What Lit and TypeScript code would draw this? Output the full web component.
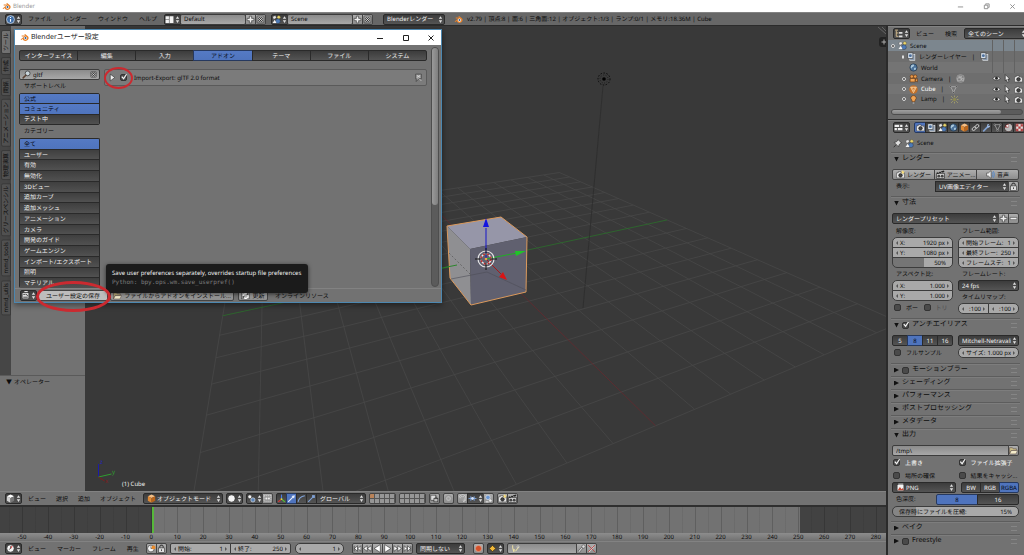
import { LitElement, html, svg, css, nothing, TemplateResult } from "lit";
import { customElement, property, state } from "lit/decorators.js";
import { classMap } from "lit/directives/class-map.js";

/* ---------- icons, all on a 16 x 16 grid ---------- */
const cubeShape = (top: string, left: string, right: string) => svg`
  <path d="M8 1 14.5 4 8 7 1.5 4Z" fill=${top} /><path d="M1.5 4 8 7V15.5L1.5 12Z" fill=${left} /><path d="M14.5 4 8 7V15.5L14.5 12Z" fill=${right} />`;
const sceneShape = svg`<path d="M1 3 6 1 8 5 3 8Z" fill="#e8e8e8" stroke="#333" stroke-width=".6"/><circle cx="12" cy="4" r="3" fill="#e9d56a" stroke="#333" stroke-width=".6"/><circle cx="10.5" cy="11" r="4.3" fill="#4d79b5" stroke="#222" stroke-width=".6"/><path d="M1 14 5 8.500 8 14Z" fill="#f4f4f4"/>`;
const cameraShape = svg`<path d="M1 5h3V3h5v2h6v9H1Z" fill="#ededed" stroke="#222" stroke-width=".8"/><circle cx="8" cy="9.500" r="3.200" fill="#444" stroke="#111"/><path d="M12 6.500h2" stroke="#222"/>`;
const layerShape = svg`<rect x="5" y="4" width="9" height="11" fill="#8a9bb0" stroke="#eee"/><rect x="1.500" y="1.500" width="9" height="10" fill="#d7e1ec" stroke="#333"/><circle cx="6" cy="6.500" r="2.600" fill="#4c6f9c"/>`;
const ICONS: Record<string, unknown> = {
  blender: svg`<path d="M1 11.500 7.500 6H3V4.500h6.500L7.600 2.700 9 1.600l5 4.200c2.600 2.500 1.400 8-4 8.200-3 .1-5-1.600-5.400-4L2.600 12.400Z" fill="#e8822a"/><circle cx="9.800" cy="9" r="3" fill="#fff"/><circle cx="9.800" cy="9" r="1.800" fill="#2c5d92"/>`,
  info: svg`<circle cx="8" cy="8" r="7" fill="#3f6ea8" stroke="#dfe8f2" stroke-width="1.200"/><path d="M7 7h2v5H7ZM7 3.500h2v2H7Z" fill="#fff"/>`,
  updown: svg`<path d="M5 6.500 8 2l3 4.500ZM5 9.500 8 14l3-4.500Z" fill="#e0e0e0"/>`,
  layout: svg`<path d="M1 2h6v6H1ZM1 9h6v5H1ZM8 2h7v12H8Z" fill="#f1f1f1"/>`,
  scene: sceneShape,
  plus: svg`<path d="M6 2h4v4h4v4h-4v4H6v-4H2V6h4Z" fill="#eee" stroke="#333" stroke-width="1.100"/>`,
  minus: svg`<path d="M2 6h12v4H2Z" fill="#eee" stroke="#444" stroke-width="1"/>`,
  close: svg`<rect x="1.500" y="1.500" width="13" height="13" rx="2" fill="none" stroke="#333"/><path d="m4 4 8 8M12 4l-8 8" stroke="#222" stroke-width="3"/><path d="m4 4 8 8M12 4l-8 8" stroke="#eee" stroke-width="1.400"/>`,
  search: svg`<circle cx="10" cy="6" r="4.300" fill="#c9d4da" stroke="#333" stroke-width="1.300"/><path d="M6.800 9.200 2 14" stroke="#5b4030" stroke-width="2.600" stroke-linecap="round"/>`,
  tri: svg`<path d="M4 2 12 8 4 14Z" fill="#eee" stroke="#222"/>`,
  user: svg`<path d="M3 2h10v8H9l-5 5v-5H3Z" fill="#999" stroke="#2b2b2b"/><path d="m5 4 6 4M11 4 5 8M9 10l4 4" stroke="#ddd" stroke-width="1.300"/>`,
  prefs: svg`<rect x="2" y="3" width="12" height="11" fill="#ddd" stroke="#222"/><path d="M4 11h8M4 6h4M9 5l3 4" stroke="#333" stroke-width="1.500"/><path d="M6 1h6" stroke="#ddd" stroke-width="2"/>`,
  folder: svg`<path d="M1 3h5l1.500 2H13v3H4L1 14Z" fill="#c9bb85" stroke="#433" stroke-width=".8"/><path d="M4 8h11l-2.500 6H1Z" fill="#f4eccb" stroke="#433" stroke-width=".8"/>`,
  reload: svg`<rect x="1" y="2" width="14" height="12" fill="#bbb" stroke="#444"/><path d="M4 9a4 4 0 0 1 7-3M12 7a4 4 0 0 1-7 4" fill="none" stroke="#fff" stroke-width="2"/><path d="m9 6 4 1V3ZM7 10l-4-1v4Z" fill="#333"/>`,
  tree: svg`<path d="M2 2h5M4 3v10M4 7h4M4 13h4" stroke="#e5c995" stroke-width="1.500" fill="none"/><path d="M9 5.500h6v3H9ZM9 11.500h6v3H9Z" fill="#ddd"/>`,
  layers: layerShape,
  world: svg`<circle cx="8" cy="8" r="6.500" fill="#4b7199" stroke="#1d2c3c"/><path d="M4 4c3-3 6-1 5 1S5 7 5 9 3 9 3 7ZM9 9c3-1 4 0 3 2s-3 2-3 0Z" fill="#a9c6da"/>`,
  camera: cameraShape,
  camobj: svg`<circle cx="5" cy="4.500" r="3" fill="#e89a4c" stroke="#5c2f0a"/><circle cx="11" cy="4.500" r="3" fill="#e89a4c" stroke="#5c2f0a"/><path d="M2 8h9v6H2ZM11 10l4-2v6l-4-2Z" fill="#f0a455" stroke="#5c2f0a"/>`,
  camdata: svg`<circle cx="8" cy="8" r="7" fill="#7d7d7d" stroke="#aaa"/><path d="M3 7h6v5H3ZM9 9l4-2v5l-4-2ZM5 4h5v2H5Z" fill="none" stroke="#ccc"/>`,
  mesh: svg`<path d="m2 3 12 0L8 14Z" fill="none" stroke="#e89a4c" stroke-width="1.600"/><circle cx="2.500" cy="3" r="1.800" fill="#f3b673"/><circle cx="13.500" cy="3" r="1.800" fill="#f3b673"/><circle cx="8" cy="13.500" r="1.800" fill="#f3b673"/>`,
  meshsel: svg`<circle cx="8" cy="8" r="7.500" fill="#c1702a"/><path d="m3 4 10 0L8 13.500Z" fill="none" stroke="#ffd9a8" stroke-width="1.500"/><path d="M5.500 4 8 10l2.500-6" stroke="#ffd9a8" fill="none"/>`,
  meshdata: svg`<path d="m3 3 10 0L8 13Z" fill="none" stroke="#ccc"/><circle cx="3" cy="3" r="1.500" fill="#333" stroke="#ccc" stroke-width=".7"/><circle cx="13" cy="3" r="1.500" fill="#333" stroke="#ccc" stroke-width=".7"/><circle cx="8" cy="13" r="1.500" fill="#333" stroke="#ccc" stroke-width=".7"/>`,
  lampobj: svg`<path d="M8 1a4.500 4.500 0 0 1 3 8l-.8 3H5.800L5 9a4.500 4.500 0 0 1 3-8Z" fill="#f0a455" stroke="#5c2f0a"/><path d="M6 13h4v2.500H6Z" fill="#ddd" stroke="#333" stroke-width=".6"/>`,
  lampdata: svg`<rect x="5.500" y="5.500" width="5" height="5" fill="#8d8a52"/><path d="m2 2 3 3M14 2l-3 3M2 14l3-3M14 14l-3-3M8 1v3M8 12v3M1 8h3M12 8h3" stroke="#b6b06a" stroke-width="1.200"/>`,
  eye: svg`<path d="M1 8q7-7 14 0-7 6-14 0Z" fill="#f2f2f2" stroke="#222"/><circle cx="8" cy="7.500" r="2.500" fill="#222"/>`,
  cursor: svg`<path d="m4 1 8 8H8.500l2 5-2.500 1-2-5L4 12Z" fill="#eee" stroke="#111"/>`,
  props: svg`<path d="M1 3h14v4H1ZM1 9h14v4H1Z" fill="#eee"/><path d="M10 3v4M6 9v4" stroke="#333" stroke-width="1.500"/>`,
  object: svg`${cubeShape("#f5bf85", "#e08a35", "#b9641b")}`,
  whitecube: svg`${cubeShape("#ffffff", "#cfcfcf", "#777777")}`,
  link: svg`<ellipse cx="5.500" cy="10" rx="4" ry="2.600" transform="rotate(-40 5.500 10)" fill="none" stroke="#ccc" stroke-width="1.600"/><ellipse cx="10.500" cy="6" rx="4" ry="2.600" transform="rotate(-40 10.500 6)" fill="none" stroke="#ccc" stroke-width="1.600"/>`,
  wrench: svg`<path d="M3 14 10 7" stroke="#7f9fce" stroke-width="3" stroke-linecap="round"/><path d="M9 3a3.500 3.500 0 0 1 4-1L11 4l1 1.500 2.500-1A3.500 3.500 0 0 1 9.500 8Z" fill="#9dbae4"/>`,
  material: svg`<circle cx="8" cy="8" r="6.500" fill="#a44" stroke="#222"/><path d="M8 1.500a6.500 6.500 0 0 1 0 13ZM1.500 8H8v6.500A6.500 6.500 0 0 1 1.500 8" fill="#bbb"/><circle cx="6" cy="5" r="2" fill="#eee"/>`,
  texture: svg`<rect x="1.500" y="1.500" width="13" height="13" fill="#ddd" stroke="#622"/><path d="M2 2h4v4H2ZM10 2h4v4h-4ZM6 6h4v4H6ZM2 10h4v4H2ZM10 10h4v4h-4Z" fill="#b33f3f"/>`,
  pin: svg`<path d="m9 1 6 6-2 .8-2.500 3L10 14 6 10l-4.500 4.500L5.500 9.500 2 6l3.200-.5 3-2.500Z" fill="#ddd" stroke="#222"/>`,
  render: svg`${cameraShape}<path d="m12 0 1 2.500L16 3l-2.200 1.500.6 2.500L12 5.700 10 7l.5-2.500L8.500 3l2.500-.5Z" fill="#ffe37a"/>`,
  clapper: svg`<path d="M1 6h14v9H1Z" fill="#d0d0d0" stroke="#111"/><path d="m1 5 13-4 1 2.500L2 7Z" fill="#222"/><path d="m4 4 2 1.500M8 2.800 10 4.500" stroke="#fff"/><circle cx="5" cy="11" r="2.500" fill="#444"/><circle cx="11" cy="11" r="2.500" fill="#444"/>`,
  sound: svg`<path d="M1 5.500h3L9 1v14L4 10.500H1Z" fill="#eee" stroke="#333"/><path d="M11 4q3 4 0 8M13 2q4.500 6 0 12" stroke="#4f86cc" fill="none" stroke-width="1.400"/>`,
  lock: svg`<rect x="3" y="7" width="10" height="8" fill="#ddd" stroke="#333"/><path d="M5 7V4q3-4 6 0v3" fill="none" stroke="#444" stroke-width="1.800"/><path d="M8 9.500v3" stroke="#333" stroke-width="1.500"/>`,
  image: svg`<rect x="2" y="3" width="12" height="11" fill="#f4f4f4" stroke="#333"/><path d="M3 13 7 7l3 4 2-2 2 4Z" fill="#c24a37"/><path d="M4 1h9v2H4Z" fill="#ccc"/>`,
  sphere: svg`<circle cx="8" cy="8" r="6.500" fill="#f5f5f5" stroke="#111"/>`,
  pivot: svg`<circle cx="5" cy="5" r="3.500" fill="#f3f3f3" stroke="#222"/><circle cx="10.500" cy="10.500" r="3.800" fill="#5d86ba" stroke="#eee"/>`,
  centers: svg`<rect x="2" y="3" width="12" height="10" fill="#999" stroke="#eee" stroke-dasharray="2 1.500"/><circle cx="6" cy="8" r="1.800" fill="#eee"/><circle cx="10.500" cy="8" r="1.800" fill="#eee"/>`,
  axes: svg`<path d="M8 9V1" stroke="#4a7be0" stroke-width="2"/><path d="m8 9-6 5" stroke="#d33" stroke-width="2"/><path d="m8 9 6 5" stroke="#5c3" stroke-width="2"/><circle cx="8" cy="9" r="1.600" fill="#dd4"/>`,
  move: svg`<path d="M2 14 11 5" stroke="#e6eefc" stroke-width="2"/><path d="m14 2-1.500 6L8 3.500Z" fill="#e6eefc"/>`,
  arc: svg`<path d="M2 14Q3 5 14 3" stroke="#7fa1d6" stroke-width="1.800" fill="none"/>`,
  scale: svg`<path d="M2 14 10 6" stroke="#7fa1d6" stroke-width="1.800"/><rect x="9" y="2" width="5" height="5" fill="#7fa1d6"/>`,
  viewlock: svg`<rect x="1.500" y="2" width="9" height="9" fill="#ddd" stroke="#222"/><rect x="7" y="8" width="7" height="6" fill="#bbb" stroke="#222"/><path d="M9 8V6q2-2 3 0v2" fill="none" stroke="#222"/>`,
  ring: svg`<circle cx="8" cy="8" r="5.500" fill="#b5b5b5" stroke="#8b8b8b" stroke-width="1.500"/><circle cx="8" cy="8" r="2" fill="#9b9b9b"/>`,
  magnet: svg`<path d="M3 7Q6 0 12 4q3 6-3 9" fill="none" stroke="#ddd" stroke-width="3"/><path d="M3 7Q6 0 12 4q3 6-3 9" fill="none" stroke="#666" stroke-width="1"/>`,
  snap: svg`<path d="M1 8h14M5 4v8M11 4v8" stroke="#7aa2dd" stroke-width="1.600"/><circle cx="8" cy="8" r="2.500" fill="#cfe0fa"/>`,
  snaptarget: svg`<circle cx="7" cy="6" r="4" fill="#6b97d3" stroke="#eee"/><path d="M3 14h5M11 9v5M9 12h5" stroke="#fff" stroke-width="1.500"/>`,
  clock: svg`<circle cx="8" cy="8" r="6.500" fill="#f4f4f4" stroke="#222"/><path d="m8 8 3-4.500" stroke="#d44" stroke-width="2"/><path d="M8 3.500V8l-3 2" stroke="#222" fill="none"/>`,
  preview: svg`<circle cx="7" cy="8" r="6" fill="#f4f4f4" stroke="#222"/><path d="M7 4v4h3" stroke="#222" fill="none"/><circle cx="11.500" cy="6" r="3.500" fill="#e98b2c"/>`,
  first: svg`<path d="M2 3v10M8 3v10L3 8ZM14 3v10L9 8Z" fill="#fff" stroke="#222"/>`,
  prevkey: svg`<path d="M7.500 3v10L1 8ZM14.500 3v10L8 8Z" fill="#fff" stroke="#222"/>`,
  back: svg`<path d="M13 1v14L2 8Z" fill="#fff" stroke="#222"/>`,
  play: svg`<path d="M3 1v14l11-7Z" fill="#fff" stroke="#222"/>`,
  nextkey: svg`<path d="M1.500 3v10L8 8ZM8.500 3v10L15 8Z" fill="#fff" stroke="#222"/>`,
  last: svg`<path d="M14 3v10M2 3v10l5-5ZM8 3v10l5-5Z" fill="#fff" stroke="#222"/>`,
  record: svg`<circle cx="8" cy="8" r="5.500" fill="#d4512b" stroke="#f1b49c"/>`,
  keyframe: svg`<path d="m8 2.500 5.500 5.500L8 13.500 2.500 8Z" fill="#f0b83a" stroke="#3a2a00"/>`,
  keying: svg`<path d="M3 2v5l2 7 1-5M8 13l6-8" stroke="#ece0a2" stroke-width="1.800" fill="none"/><circle cx="12.500" cy="5" r="2" fill="none" stroke="#ddd"/>`,
  key: svg`<path d="M3 14 10 6" stroke="#444" stroke-width="3.600"/><path d="M3 14 10 6" stroke="#ddd" stroke-width="2"/><circle cx="11.500" cy="4.500" r="3" fill="#ddd" stroke="#444"/>`,
  nokey: svg`<path d="M3 14 12 4" stroke="#ddd" stroke-width="2.400"/><path d="m2 2 12 12M14 2 2 14" stroke="#b44" stroke-width="1.600"/>`,
};

const icon = (name: string) =>
  html`<svg class="ic" viewBox="0 0 16 16" aria-hidden="true">${ICONS[name]}</svg>`;
const arrows = () =>
  html`<svg class="ic ud" viewBox="4 0 8 16" aria-hidden="true">${ICONS.updown}</svg>`;

/* ---------- perspective floor of the 3D view ---------- */
const project = (u: number, v: number): [number, number] => {
  const w = 1 - 0.0546 * u + 0.0231 * v;
  return [(486 - 14.6 * u + 38.05 * v) / w, (259 - 2.4 * u + 0.2 * v) / w];
};
const gridLine = (u1: number, v1: number, u2: number, v2: number, color: string) => {
  const [x1, y1] = project(u1, v1);
  const [x2, y2] = project(u2, v2);
  return svg`<line x1=${x1} y1=${y1} x2=${x2} y2=${y2} stroke=${color} />`;
};
const STEPS = Array.from({ length: 17 }, (_, i) => i - 8);
const FRAMES = Array.from({ length: 34 }, (_, i) => -50 + i * 10);
const CATEGORIES = ["全て", "ユーザー", "有効", "無効化", "3Dビュー", "追加カーブ", "追加メッシュ", "アニメーション", "カメラ", "開発のガイド", "ゲームエンジン", "インポート/エクスポート", "照明", "マテリアル"];
const PREF_TABS = ["インターフェイス", "編集", "入力", "アドオン", "テーマ", "ファイル", "システム"];
const SHELF_TABS = ["ツール", "作成", "関係", "アニメーション", "物理演算", "グリースペンシル", "mmd_tools", "mmd_utils"];

/* ---------- styles shared by every part ---------- */
const shared = css`
  :host { display: block; font: 6px/10px "Noto Sans", "Noto Sans CJK JP", sans-serif; color: #0c0c0c; text-rendering: geometricPrecision; }
  * { box-sizing: border-box; }
  button, input, select { font: inherit; color: inherit; margin: 0; padding: 0; border: 0; background: none; min-width: 0; border-radius: 0; outline: 0; text-rendering: inherit; }
  select { appearance: none; flex: 1; width: 100%; text-overflow: clip; }
  a { color: inherit; text-decoration: none; }
  svg.ic { width: 9px; height: 9px; flex: none; display: block; }
  svg.ud { width: 5px; height: 9px; }
  .bar { display: flex; align-items: center; height: 14px; background: #727272; padding-left: 5px; border-top: 1px solid #828282; white-space: nowrap; flex: none; }
  .menus { display: flex; gap: 10px; padding: 0 7px 0 6px; }
  .dark, .pick { display: flex; align-items: center; justify-content: center; height: 11px; border: 1px solid #2a2a2a; border-radius: 2px; background: linear-gradient(#3c3c3c, #545454); color: #f0f0f0; flex: none; }
  .pick { width: 17px; gap: 1px; }
  .drop { padding: 0 1px 0 3px; justify-content: flex-start; gap: 1px; }
  .light { display: flex; align-items: center; justify-content: center; gap: 2px; height: 11px; border: 1px solid #444; border-radius: 2px; background: linear-gradient(#aeaeae, #8d8d8d); flex: none; white-space: nowrap; overflow: hidden; }
  .sq { width: 11px; }
  .join { display: flex; flex: none; min-width: 0; }
  .join > * { border-radius: 0; margin-left: -1px; }
  .join > :first-child { border-radius: 2px 0 0 2px; margin-left: 0; }
  .join > :last-child { border-radius: 0 2px 2px 0; }
  .field { display: flex; align-items: center; height: 11px; border: 1px solid #3c3c3c; border-radius: 2px; background: linear-gradient(#8b8b8b, #a8a8a8); padding: 0 3px; overflow: hidden; flex: none; }
  .field input { flex: 1; width: 100%; height: 9px; }
  .on { background: #4f74bd; color: #04070f; border-color: #26395f; }
  .num { display: flex; align-items: center; height: 11px; border: 1px solid #3c3c3c; border-radius: 5px; background: #a9a9a9; white-space: nowrap; padding: 0 3px; gap: 2px; flex: none; overflow: hidden; }
  .num::before, .num::after { content: ""; border: solid transparent; border-width: 2px 0; flex: none; }
  .num::before { border-right: 2px solid #555; }
  .num::after { border-left: 2px solid #555; }
  .num input { flex: 1; width: 0; text-align: right; height: 9px; }
  .tick { display: flex; align-items: center; gap: 5px; white-space: nowrap; }
  .tick input, .box { appearance: none; width: 7px; height: 7px; background: #4a4a4a; border: 1px solid #333; border-radius: 2px; flex: none; display: block; }
  .tick input:checked::before, .box:checked::before { content: ""; display: block; width: 6px; height: 6px; margin: -1px 0 0; background: #f5f5f5; clip-path: polygon(5% 50%, 22% 38%, 42% 62%, 84% 0, 100% 8%, 45% 95%); }
`;

/* ---------- the user preferences window ---------- */
@customElement("prefs-window")
export class PrefsWindow extends LitElement {
  @state() private tab = "アドオン";
  @state() private category = "全て";

  static styles = [shared, css`
    :host { display: flex; flex-direction: column; background: #727272; border: 1px solid #4c87b0; box-shadow: 0 2px 6px rgba(0, 0, 0, 0.45); }
    .title { display: flex; align-items: center; gap: 2px; height: 15px; padding: 0 3px 0 5px; background: #fff; color: #222; flex: none; }
    .title span { flex: 1; font-size: 7px; }
    .winbtn { width: 24px; height: 15px; display: grid; place-items: center; }
    .winbtn:last-child { width: 14px; margin-left: 4px; }
    .winbtn svg { width: 8px; height: 8px; fill: none; stroke: #222; }
    .body { flex: 1; display: flex; min-height: 0; }
    .main { flex: 1; display: flex; flex-direction: column; padding: 5px 3px 0 4px; min-width: 0; }
    .tabs { display: flex; height: 11px; flex: none; margin-bottom: 8px; }
    .tabs button { flex: 1; }
    .tabs .on, .cats .on { background: linear-gradient(#557ac4, #4f74bd); color: #04070f; }
    .cols { flex: 1; display: flex; gap: 4px; min-height: 0; }
    .side { width: 81px; display: flex; flex-direction: column; flex: none; }
    .side h3 { font: inherit; margin: 0; padding-left: 5px; height: 13px; line-height: 13px; flex: none; }
    .search { gap: 2px; padding: 0 2px; }
    .search .ic:last-child { width: 7px; height: 7px; }
    .cats { display: flex; flex-direction: column; border: 1px solid #2a2a2a; border-radius: 2px; overflow: hidden; }
    .levels { height: 32px; flex: none; }
    .all { flex: 1; min-height: 0; border-bottom: 0; }
    .cats button { flex: 1 1 0; min-height: 0; line-height: 8px; text-align: left; padding-left: 4px; color: #f0f0f0; background: linear-gradient(#3f3f3f, #515151); border-bottom: 1px solid #2a2a2a; display: flex; align-items: center; }
    .cats button:last-child { border-bottom: 0; }
    .addon { flex: 1; height: 17px; display: flex; align-items: center; gap: 3px; padding: 0 3px; background: #7b7b7b; border: 1px solid #5a5a5a; border-radius: 2px; }
    .addon label { flex: 1; display: flex; align-items: center; gap: 7px; }
    .scroll { width: 8px; margin: 2px 2px 1px 1px; border-radius: 4px; background: #5b5b5b; border: 1px solid #4e4e4e; flex: none; }
    .thumb { height: 66%; border-radius: 4px; background: linear-gradient(90deg, #9a9a9a, #7e7e7e); }
    .foot { gap: 4px; }
    .foot .pick { margin-right: -3px; }
    .save { width: 70px; background: #bdbdbd; margin-right: -2px; }
    .install { width: 124px; }
    .refresh { width: 30px; }
    .foot a { padding-left: 3px; }
  `];

  render() {
    return html`
      <div class="title">
        ${icon("blender")}<span>Blenderユーザー設定</span>
        <button class="winbtn" aria-label="最小化"><svg viewBox="0 0 8 8"><path d="M1 4.500h6" /></svg></button>
        <button class="winbtn" aria-label="最大化"><svg viewBox="0 0 8 8"><path d="M1.500 1.500h5v5h-5Z" /></svg></button>
        <button class="winbtn" aria-label="閉じる"><svg viewBox="0 0 8 8"><path d="m1.500 1.500 5 5m0-5-5 5" /></svg></button>
      </div>
      <div class="body">
        <div class="main">
          <div class="tabs join">
            ${PREF_TABS.map((t) => html`<button class=${classMap({ dark: true, on: t === this.tab })} @click=${() => (this.tab = t)}>${t}</button>`)}
          </div>
          <div class="cols">
            <div class="side">
              <label class="field search">${icon("search")}<input aria-label="検索" value="gltf" />${icon("close")}</label>
              <h3>サポートレベル</h3>
              <div class="cats levels">
                <button class="on">公式</button><button class="on">コミュニティ</button><button>テスト中</button>
              </div>
              <h3>カテゴリー</h3>
              <div class="cats all">
                ${CATEGORIES.map((c) => html`<button class=${classMap({ on: c === this.category })} @click=${() => (this.category = c)}>${c}</button>`)}
              </div>
            </div>
            <div class="addon">
              ${icon("tri")}
              <label><input class="box" type="checkbox" checked />Import-Export: glTF 2.0 format</label>
              ${icon("user")}
            </div>
          </div>
        </div>
        <div class="scroll"><div class="thumb"></div></div>
      </div>
      <div class="bar foot">
        <button class="pick" aria-label="エディタータイプ">${icon("prefs")}${arrows()}</button>
        <button class="light save">ユーザー設定の保存</button>
        <button class="light install">${icon("folder")}ファイルからアドオンをインストール...</button>
        <button class="light refresh">${icon("reload")}更新</button>
        <a href="#online">オンラインリソース</a>
      </div>`;
  }
}

/* ---------- a collapsible panel of the properties editor ---------- */
@customElement("prop-panel")
export class PropPanel extends LitElement {
  @property() heading = "";
  @property({ type: Boolean }) open = false;
  @property({ type: Boolean }) boxed = false;
  @property({ type: Boolean }) ticked = false;

  static styles = [shared, css`
    :host { border-top: 1px solid #5d5d5d; box-shadow: inset 0 1px #7d7d7d; }
    .head { display: flex; align-items: center; height: 12px; gap: 3px; padding: 0 3px; }
    .head::after { content: ""; width: 6px; height: 3px; margin-left: auto; border: solid #858585; border-width: 1px 0; }
    .head span { font-size: 7px; }
    .arrow { width: 5px; height: 5px; background: #111; clip-path: polygon(0 0, 100% 50%, 0 100%); }
    .down { clip-path: polygon(0 0, 100% 0, 50% 100%); }
    .body { padding: 4px 0 4px; }
  `];

  render() {
    return html`
      <div class="head">
        <i class=${classMap({ arrow: true, down: this.open })}></i>
        ${this.boxed ? html`<input class="box" type="checkbox" aria-label=${this.heading} .checked=${this.ticked} />` : nothing}
        <span>${this.heading}</span>
      </div>
      ${this.open ? html`<div class="body"><slot></slot></div>` : nothing}`;
  }
}

/* ---------- outliner and properties column ---------- */
@customElement("side-column")
export class SideColumn extends LitElement {
  static styles = [shared, css`
    :host { display: flex; flex-direction: column; border-left: 2px solid #2b2b2b; background: #727272; overflow: hidden; }
    .bar .menus { gap: 11px; }
    .scenes { width: 64px; }
    .outliner { flex: none; padding-bottom: 4px; background: #6e6e6e; border-bottom: 1px solid #2b2b2b; }
    .row { display: flex; align-items: center; height: 11px; padding-right: 1px; gap: 3px; white-space: nowrap; }
    .row:nth-child(5), .row:nth-child(6) { height: 10px; }
    .row:nth-child(odd) { background: #747474; }
    .row.active { background: #7c868e; }
    .dot { width: 4px; height: 4px; border: 1px solid #ddd; border-radius: 2px; background: #444; }
    .child { padding-left: 11px; }
    .row > .dot { margin-left: 3px; }
    .hide { visibility: hidden; }
    .sep { padding: 0 2px; }
    .white { color: #fff; }
    .marks { margin-left: auto; display: flex; gap: 2px; height: 100%; align-items: center; }
    .marks i { width: 9px; height: 100%; border-left: 1px solid #626262; }
    .track { margin: 5px 1px 0 3px; height: 6px; border: 1px solid #4c4c4c; border-radius: 3px; background: #5c5c5c; }
    .track div { width: 84%; height: 4px; border-radius: 2px; background: linear-gradient(#a0a0a0, #808080); }
    .contexts { margin-left: 4px; }
    .contexts > * { width: 12px; }
    .contexts .on { background: #4f74bd; }
    .crumb { display: flex; align-items: center; gap: 3px; height: 18px; padding-left: 5px; }
    .panels { padding: 0 4px 0 3px; }
    .line, .cols { display: flex; padding: 0 1px; }
    .line > *, .line.join > .grow { flex: 1; }
    .line > .fix { flex: none; }
    .cap { width: 44px; flex: none; padding-left: 4px; }
    .line > .cap { flex: none; }
    .cols { gap: 5px; }
    .cols > * { flex: 1; width: 0; }
    .stack > .num { border-radius: 0; margin-top: -1px; }
    .stack > .num:first-of-type { border-radius: 5px 5px 0 0; margin-top: 0; }
    .stack > .num:last-of-type { border-radius: 0 0 5px 5px; }
    .lab { padding-left: 4px; height: 12px; line-height: 12px; white-space: nowrap; }
    .half { background: linear-gradient(90deg, #757575 52%, #a9a9a9 52%); }
    .half::before, .half::after, .slide::before, .slide::after { display: none; }
    .half, .slide { padding-right: 6px; }
    .gap { margin-top: 1px; }
    .pair { display: flex; }
    .pair > * { flex: 1; width: 0; }
    .pair > .num:first-child { border-radius: 5px 0 0 5px; }
    .pair > .num:last-child { border-radius: 0 5px 5px 0; margin-left: -1px; }
    .checks { height: 13px; align-items: center; padding-left: 2px; }
    .dim { color: #4e4e4e; }
    .slide { background: linear-gradient(90deg, #858585 18%, #a9a9a9 18%); flex: 1; }
    .slide input { flex: none; width: 24px; }
    .slide span { flex: 1; padding-left: 3px; }
    .four > * { flex: 1; }
  `];

  private row(name: string, ic: string, data: string, cls = "") {
    return html`<div class="row child">
      <i class=${classMap({ dot: true, hide: name === "World" })}></i>${icon(ic)}<span class=${cls}>${name}</span>
      ${data ? html`<span class="sep">|</span>${icon(data)}` : nothing}
      ${["Camera", "Cube", "Lamp"].includes(name)
        ? html`<span class="marks">${icon("eye")}${icon("cursor")}${icon("camera")}</span>`
        : html`<span class="marks"><i></i><i></i><i></i></span>`}
    </div>`;
  }
  private num(label: string, value: string, cls = "") {
    return html`<label class="num ${cls}"><span>${label}</span><input value=${value} /></label>`;
  }
  private tick(label: string, on = false, cls = "") {
    return html`<label class="tick ${cls}"><input type="checkbox" .checked=${on} />${label}</label>`;
  }
  private drop(value: string, label: string, cls = "", ic?: TemplateResult) {
    return html`<span class="dark drop ${cls}">${ic ?? nothing}<select aria-label=${label}><option>${value}</option></select>${arrows()}</span>`;
  }

  render() {
    return html`
      <div class="bar">
        <button class="pick" aria-label="エディタータイプ">${icon("tree")}${arrows()}</button>
        <div class="menus"><span>ビュー</span><span>検索</span></div>
        ${this.drop("全てのシーン", "表示", "scenes")}
      </div>
      <div class="outliner">
        <div class="row active"><i class="dot"></i>${icon("scene")}<span>Scene</span><span class="marks"><i></i><i></i><i></i></span></div>
        ${this.row("レンダーレイヤー", "layers", "layers")}
        ${this.row("World", "world", "")}
        ${this.row("Camera", "camobj", "camdata")}
        ${this.row("Cube", "meshsel", "meshdata", "white")}
        ${this.row("Lamp", "lampobj", "lampdata")}
        <div class="track"><div></div></div>
      </div>
      <div class="bar">
        <button class="pick" aria-label="エディタータイプ">${icon("props")}${arrows()}</button>
        <div class="join contexts">
          ${["camera", "layers", "scene", "world", "object", "link", "wrench", "meshdata", "material", "texture"].map(
            (n, i) => html`<button class=${classMap({ dark: true, on: i === 0 })} aria-label=${n}>${icon(n)}</button>`)}
        </div>
      </div>
      <div class="crumb">${icon("pin")}${icon("scene")}<span>Scene</span></div>
      <div class="panels">
        <prop-panel heading="レンダー" open>
          <div class="line join">
            <button class="light">${icon("render")}レンダー</button>
            <button class="light">${icon("clapper")}アニメー...</button>
            <button class="light">${icon("sound")}音声</button>
          </div>
          <div class="line gap join">
            <span class="cap">表示:</span>
            ${this.drop("UV画像エディター", "表示", "grow")}
            <button class="light sq fix" aria-label="ロック">${icon("lock")}</button>
          </div>
        </prop-panel>
        <prop-panel heading="寸法" open>
          <div class="line join">
            ${this.drop("レンダープリセット", "レンダープリセット", "grow")}
            <button class="light sq fix" aria-label="追加">${icon("plus")}</button>
            <button class="light sq fix" aria-label="削除">${icon("minus")}</button>
          </div>
          <div class="cols gap">
            <div>
              <div class="lab">解像度:</div>
              <div class="stack">${this.num("X:", "1920 px")}${this.num("Y:", "1080 px")}${this.num("", "50%", "half")}</div>
              <div class="lab">アスペクト比:</div>
              <div class="stack">${this.num("X:", "1.000")}${this.num("Y:", "1.000")}</div>
              <div class="pair checks">${this.tick("ボー")}${this.tick("トリ", false, "dim")}</div>
            </div>
            <div>
              <div class="lab">フレーム範囲:</div>
              <div class="stack">${this.num("開始フレーム:", "1")}${this.num("最終フレー:", "250")}${this.num("フレームステ:", "1")}</div>
              <div class="lab">フレームレート:</div>
              ${this.drop("24 fps", "フレームレート")}
              <div class="lab">タイムリマップ:</div>
              <div class="pair">${this.num("", ":100")}${this.num("", ":100")}</div>
            </div>
          </div>
        </prop-panel>
        <prop-panel heading="アンチエイリアス" open boxed ticked>
          <div class="cols">
            <div>
              <div class="join four"><button class="dark">5</button><button class="dark on">8</button><button class="dark">11</button><button class="dark">16</button></div>
              <div class="checks pair">${this.tick("フルサンプル")}</div>
            </div>
            <div>
              ${this.drop("Mitchell-Netravali", "フィルター")}
              <div class="gap">${this.num("サイズ:", "1.000 px")}</div>
            </div>
          </div>
        </prop-panel>
        <prop-panel heading="モーションブラー" boxed></prop-panel>
        <prop-panel heading="シェーディング"></prop-panel>
        <prop-panel heading="パフォーマンス"></prop-panel>
        <prop-panel heading="ポストプロセッシング"></prop-panel>
        <prop-panel heading="メタデータ"></prop-panel>
        <prop-panel heading="出力" open>
          <div class="line join">
            <label class="field"><input aria-label="出力パス" value="/tmp\\" /></label>
            <button class="light sq fix" aria-label="フォルダーを開く">${icon("folder")}</button>
          </div>
          <div class="cols checks">${this.tick("上書き", true, "white")}${this.tick("ファイル拡張子", true, "white")}</div>
          <div class="cols checks">${this.tick("場所の確保")}${this.tick("結果をキャッシ...")}</div>
          <div class="cols">
            ${this.drop("PNG", "ファイル形式", "", icon("image"))}
            <div class="join four"><button class="dark">BW</button><button class="dark">RGB</button><button class="dark on">RGBA</button></div>
          </div>
          <div class="line gap"><span class="cap">色深度:</span><div class="join four"><button class="dark on">8</button><button class="dark">16</button></div></div>
          <div class="line gap">${this.num("保存時にファイルを圧縮:", "15%", "slide")}</div>
        </prop-panel>
        <prop-panel heading="ベイク"></prop-panel>
        <prop-panel heading="Freestyle" boxed></prop-panel>
      </div>`;
  }
}

/* ---------- whole application ---------- */
@customElement("app-root")
export class AppRoot extends LitElement {
  static styles = [shared, css`
    :host { position: relative; display: flex; flex-direction: column; height: 100vh; overflow: hidden; background: #727272; }
    .os { display: flex; align-items: center; gap: 2px; height: 12px; padding-left: 2px; background: #fff; color: #999; flex: none; }
    .os span { flex: 1; }
    .os button { width: 24px; height: 12px; display: grid; place-items: center; }
    .os button svg { width: 7px; height: 7px; fill: none; stroke: #888; }
    .info { background: #676767; border-bottom: 1px solid #2b2b2b; }
    .info .menus { gap: 11px; }
    .name { width: 66px; }
    .block { margin-right: 5px; }
    .engine { width: 62px; margin: 0 9px 0 5px; }
    .stats { padding-left: 4px; }
    .work { flex: 1; display: grid; grid-template-columns: 1fr 138px; min-height: 0; }
    .left { display: flex; flex-direction: column; min-width: 0; min-height: 0; }
    .view { flex: 1; display: flex; min-height: 0; background: #393939; }
    .shelf { width: 85px; display: flex; flex-direction: column; background: #727272; flex: none; }
    .tools { flex: 1; display: flex; }
    .tabs { width: 11px; background: #464646; padding: 4px 0 0 1px; display: flex; flex-direction: column; gap: 3px; flex: none; }
    .tabs button { writing-mode: vertical-rl; text-orientation: sideways; transform: rotate(180deg); width: 10px; line-height: 9px; background: #515151; border: 1px solid #3a3a3a; border-radius: 0 2px 2px 0; padding: 2px 0; }
    .tabs button:first-child { background: #727272; }
    .ops { height: 116px; border-top: 1px solid #5a5a5a; padding: 1px 6px; display: flex; align-items: flex-start; gap: 2px; }
    .canvas { flex: 1; min-width: 0; }
    .canvas svg { display: block; width: 100%; height: 100%; }
    .canvas text { font-size: 6px; }
    .mode { width: 80px; margin-right: 3px; }
    .bar3d .pick { margin-right: 3px; }
    .bar3d .nomargin { margin-right: 0; }
    .orient { width: 50px; }
    .layers { display: grid; grid-template-columns: repeat(5, 5px); grid-auto-rows: 4px; gap: 1px 0; background: #555; border: 1px solid #444; border-radius: 2px; margin-left: 3px; overflow: hidden; }
    .layers i { background: #969696; border-right: 1px solid #555; }
    .layers .lit { background: #b98258; }
    .m { margin-left: 3px; }
    .timeline { flex: none; height: 36px; border-top: 2px solid #2f2f2f; display: flex; padding-left: 9px; background: linear-gradient(#8d8d8d, #707070) bottom / 100% 8px no-repeat, linear-gradient(90deg, #424242 17.2%, #727272 17.2% 90.3%, #424242 90.3%); position: relative; overflow: hidden; }
    .frames { flex: 1; display: flex; margin-right: -3px; }
    .frame { flex: 1; width: 0; display: flex; align-items: flex-end; justify-content: center; line-height: 8px; background: linear-gradient(90deg, transparent 50%, rgba(0, 0, 0, 0.17) 50% 54%, transparent 54%) top / 100% 26px no-repeat, linear-gradient(90deg, rgba(0, 0, 0, 0.06) 4%, transparent 4%) top / 100% 26px no-repeat; }
    .now { position: absolute; left: 17.2%; top: 0; width: 2px; height: 26px; background: #56b83a; }
    .range { width: 61px; }
    .cur { width: 49px; margin: 0 8px 0 4px; }
    .sync { width: 49px; margin: 0 8px 0 3px; }
    .keyset { width: 70px; }
    .rec { margin-right: 3px; }
    .tl .menus { gap: 11px; }
    prefs-window { position: absolute; left: 14px; top: 29px; width: 428px; height: 274px; }
    .tip { position: absolute; left: 106px; top: 264px; padding: 4px 7px 5px 6px; background: #1b1b1b; border-radius: 3px; color: #f4f4f4; box-shadow: 0 1px 4px rgba(0, 0, 0, 0.6); white-space: nowrap; }
    .tip code { display: block; font: 6px/10px "DejaVu Sans Mono", monospace; color: #7b7b7b; }
    .ring { position: absolute; border: 2px solid #cb2a30; border-radius: 50%; pointer-events: none; }
    .ring-check { left: 104px; top: 67px; width: 29px; height: 22px; }
    .ring-save { left: 36px; top: 281px; width: 75px; height: 31px; border-width: 3px; }
  `];

  private viewport() {
    return html`<svg viewBox="85 26 801 465" preserveAspectRatio="xMinYMin slice" role="img" aria-label="3Dビュー">
      <g stroke-width=".8">
        ${STEPS.map((i) => (i ? gridLine(i, -8, i, 8, "#474747") : nothing))}
        ${STEPS.map((i) => (i ? gridLine(-8, i, 8, i, "#474747") : nothing))}
        ${gridLine(0, -8, 0, 8, "#2b6e2b")}${gridLine(-8, 0, 8, 0, "#662a2e")}
      </g>
      <path d="M603 86 583 308" stroke="#2b2b2b" stroke-width=".7" />
      <circle cx="604" cy="79" r="1.800" /><circle cx="604" cy="79" r="6" fill="none" stroke="#0b0b0b" stroke-dasharray="1.500 1.500" /><circle cx="604" cy="79" r="4" fill="none" stroke="#0b0b0b" stroke-width=".6" stroke-dasharray="1 1.500" />
      <g stroke="#dc9a5c" stroke-linejoin="round">
        <path d="M447 226 501 217 527 237 470 249Z" fill="#9696a8" stroke="none" />
        <path d="M447 226 470 249 471 305 450 278Z" fill="#8f8f92" stroke="none" />
        <path d="M470 249 527 237 526 292 471 305Z" fill="#60606f" stroke="none" />
        <path d="M447 226 501 217 527 237 526 292 471 305 450 278Z" fill="none" />
      </g>
      <path d="M449 253 470 274" stroke="#555" stroke-dasharray="2 2" stroke-width=".7" /><path d="M451 279 487 272 526 290" stroke="#4d4d58" stroke-width=".6" fill="none" />
      <path d="M442 268 457 265" stroke="#2c862c" />
      <path d="M486 259V228" stroke="#1414c8" /><path d="m486 218 3 9h-6Z" fill="#1414e0" />
      <path d="m486 259 31-6" stroke="#1fae25" /><path d="m526 251-10 5-1-5Z" fill="#20c428" />
      <path d="m486 259 15 15" stroke="#a81818" /><path d="m507 280-8-3 4-5Z" fill="#d81414" />
      <circle cx="486" cy="259" r="8" fill="none" stroke="#e6e6e6" stroke-width="1.200" /><circle cx="486" cy="259" r="5" fill="none" stroke="#e8e8e8" stroke-width="1.400" /><circle cx="486" cy="259" r="5" fill="none" stroke="#c02b2b" stroke-width="1.400" stroke-dasharray="2 2" />
      <path d="M475 259h7M490 259h7M486 248v7M486 263v7" stroke="#111" /><circle cx="486" cy="259" r="1.300" fill="#f0a04a" />
      <path d="M98.500 477V464" stroke="#1c1ca8" /><path d="m98.500 477 13-3" stroke="#2f9e2f" /><path d="m98.500 477 6 4" stroke="#801c1c" />
      <text x="100" y="464" fill="#2424b8">z</text><text x="112" y="474" fill="#2f9e2f">y</text><text x="105" y="483" fill="#801c1c">x</text>
      <text x="122" y="486" fill="#f0f0f0">(1) Cube</text>
      <rect x="879" y="37" width="9" height="10" rx="3" fill="#222" /><path d="M881.500 42h5M884 39.500v5" stroke="#aaa" />
      <path d="m878 27 8 7M882 27l4 4" stroke="#777" stroke-width=".7" />
    </svg>`;
  }
  private drop(value: string, label: string, cls: string, ic?: TemplateResult) {
    return html`<span class="dark drop ${cls}">${ic ?? nothing}<select aria-label=${label}><option>${value}</option></select>${arrows()}</span>`;
  }
  private pick(ic: string, label: string, cls = "") {
    return html`<button class="pick ${cls}" aria-label=${label}>${icon(ic)}${arrows()}</button>`;
  }
  private menus(...names: string[]) {
    return html`<div class="menus">${names.map((n) => html`<span>${n}</span>`)}</div>`;
  }
  private data(ic: string, label: string, value: string) {
    return html`<div class="join block">
      ${this.pick(ic, label)}
      <label class="field name"><input aria-label=${label} value=${value} /></label>
      <button class="light sq" aria-label="追加">${icon("plus")}</button>
      <button class="light sq" aria-label="削除">${icon("close")}</button>
    </div>`;
  }

  render() {
    return html`
      <div class="os">
        ${icon("blender")}<span>Blender</span>
        <button aria-label="最小化"><svg viewBox="0 0 8 8"><path d="M1 4.500h6" /></svg></button>
        <button aria-label="元に戻す"><svg viewBox="0 0 8 8"><path d="M1.500 2.500h4v4h-4ZM3 2V1h4v4H6" /></svg></button>
        <button aria-label="閉じる"><svg viewBox="0 0 8 8"><path d="m1.500 1.500 5 5m0-5-5 5" /></svg></button>
      </div>
      <div class="bar info">
        ${this.pick("info", "エディタータイプ")}
        ${this.menus("ファイル", "レンダー", "ウィンドウ", "ヘルプ")}
        ${this.data("layout", "画面レイアウト", "Default")}
        ${this.data("scene", "シーン", "Scene")}
        ${this.drop("Blenderレンダー", "レンダーエンジン", "engine")}
        ${icon("blender")}
        <span class="stats">v2.79 | 頂点:8 | 面:6 | 三角面:12 | オブジェクト:1/3 | ランプ:0/1 | メモリ:18.36M | Cube</span>
      </div>
      <div class="work">
        <div class="left">
          <div class="view">
            <div class="shelf">
              <div class="tools"><div class="tabs">${SHELF_TABS.map((t) => html`<button>${t}</button>`)}</div></div>
              <div class="ops"><span>▼</span><span>オペレーター</span></div>
            </div>
            <div class="canvas">${this.viewport()}</div>
          </div>
          <div class="bar bar3d">
            ${this.pick("whitecube", "エディタータイプ", "nomargin")}
            ${this.menus("ビュー", "選択", "追加", "オブジェクト")}
            ${this.drop("オブジェクトモード", "モード", "mode", icon("object"))}
            ${this.pick("sphere", "シェーディング")}
            <div class="join">${this.pick("pivot", "ピボット", "nomargin")}<button class="light sq" aria-label="中心のみ">${icon("centers")}</button></div>
            <div class="join m">
              <button class="dark sq" aria-label="マニピュレーター">${icon("axes")}</button>
              <button class="dark sq on" aria-label="移動">${icon("move")}</button>
              <button class="dark sq" aria-label="回転">${icon("arc")}</button>
              <button class="dark sq" aria-label="拡大縮小">${icon("scale")}</button>
              ${this.drop("グローバル", "座標系", "orient")}
            </div>
            <div class="layers"><i class="lit"></i>${STEPS.slice(0, 9).map(() => html`<i></i>`)}</div>
            <div class="layers">${STEPS.slice(0, 10).map(() => html`<i></i>`)}</div>
            <button class="light sq m" aria-label="ロック">${icon("viewlock")}</button>
            <button class="light sq m" aria-label="プロポーショナル編集">${icon("ring")}</button>
            <div class="join m">
              <button class="light sq" aria-label="スナップ">${icon("magnet")}</button>
              ${this.pick("snap", "スナップ要素", "nomargin")}
              <button class="light sq" aria-label="スナップターゲット">${icon("snaptarget")}</button>
            </div>
            <div class="join m">
              <button class="light sq" aria-label="レンダー">${icon("render")}</button>
              <button class="light sq" aria-label="アニメーション">${icon("clapper")}</button>
            </div>
          </div>
          <div class="timeline">
            <div class="frames">${FRAMES.map((f) => html`<div class="frame">${f}</div>`)}</div>
            <div class="now"></div>
          </div>
          <div class="bar tl">
            ${this.pick("clock", "エディタータイプ")}
            ${this.menus("ビュー", "マーカー", "フレーム", "再生")}
            <div class="join">
              <button class="light sq" aria-label="プレビュー範囲">${icon("preview")}</button>
              <button class="light sq" aria-label="ロック">${icon("lock")}</button>
            </div>
            <div class="join m">
              <label class="num range"><span>開始:</span><input value="1" /></label>
              <label class="num range"><span>終了:</span><input value="250" /></label>
            </div>
            <label class="num cur"><input aria-label="現在のフレーム" value="1" /></label>
            <div class="join">
              ${["first", "prevkey", "back", "play", "nextkey", "last"].map((n) => html`<button class="light sq" aria-label=${n}>${icon(n)}</button>`)}
            </div>
            ${this.drop("同期しない", "同期モード", "sync")}
            <button class="light sq rec" aria-label="自動キー">${icon("record")}</button>
            ${this.pick("keyframe", "キーフレームタイプ")}
            <div class="join m">
              <label class="field keyset">${icon("keying")}<input aria-label="キーイングセット" /></label>
              <button class="light sq" aria-label="キー挿入">${icon("key")}</button>
              <button class="light sq" aria-label="キー削除">${icon("nokey")}</button>
            </div>
          </div>
        </div>
        <side-column></side-column>
      </div>
      <prefs-window></prefs-window>
      <div class="tip" role="tooltip">Save user preferences separately, overrides startup file preferences<code>Python: bpy.ops.wm.save_userpref()</code></div>
      <div class="ring ring-check"></div>
      <div class="ring ring-save"></div>`;
  }
}
